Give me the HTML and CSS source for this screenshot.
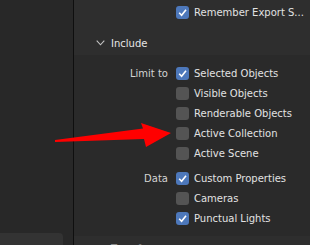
FILE: index.html
```html
<!DOCTYPE html>
<html lang="en">
<head>
  <meta charset="UTF-8">
  <title>Export Include</title>
  <link rel="stylesheet" href="styles.css">
</head>
<body>
  <div class="app">
    <div class="sidebar">
      <div class="sidebar-foot"></div>
    </div>
    <div class="props">
      <div class="top-section">
        <div class="check top-check">
          <span class="box on"><svg viewBox="0 0 13 13"><path d="M3.2 6.8 L5.6 9.2 L10 3.8"/></svg></span>
          <span>Remember Export S...</span>
        </div>
      </div>
      <div class="subheader">
        <svg class="chevron" viewBox="0 0 9 6"><path d="M0.7 0.7 L4.5 4.8 L8.3 0.7"/></svg>
        <span>Include</span>
      </div>
      <div class="group first">
        <div class="label">Limit to</div>
        <div class="check"><span class="box on"><svg viewBox="0 0 13 13"><path d="M3.2 6.8 L5.6 9.2 L10 3.8"/></svg></span><span>Selected Objects</span></div>
        <div class="label"></div>
        <div class="check"><span class="box"></span><span>Visible Objects</span></div>
        <div class="label"></div>
        <div class="check"><span class="box"></span><span>Renderable Objects</span></div>
        <div class="label"></div>
        <div class="check"><span class="box"></span><span>Active Collection</span></div>
        <div class="label"></div>
        <div class="check"><span class="box"></span><span>Active Scene</span></div>
      </div>
      <div class="group second">
        <div class="label">Data</div>
        <div class="check"><span class="box on"><svg viewBox="0 0 13 13"><path d="M3.2 6.8 L5.6 9.2 L10 3.8"/></svg></span><span>Custom Properties</span></div>
        <div class="label"></div>
        <div class="check"><span class="box"></span><span>Cameras</span></div>
        <div class="label"></div>
        <div class="check"><span class="box on"><svg viewBox="0 0 13 13"><path d="M3.2 6.8 L5.6 9.2 L10 3.8"/></svg></span><span>Punctual Lights</span></div>
      </div>
      <div class="subheader next">
        <svg class="chevron" viewBox="0 0 6 9"><path d="M0.7 0.7 L4.8 4.5 L0.7 8.3"/></svg>
        <span>Transform</span>
      </div>
    </div>
  </div>

  <!-- red annotation arrow drawn over the panel -->
  <svg class="arrow" viewBox="0 0 310 245">
    <polygon points="55,140 143,128.5 141,123 171,133 146,147 144,139 55,142"/>
  </svg>
</body>
</html>
```

FILE: styles.css
```css
body {
  margin: 0;
  padding: 0;
  background-color: #2a2a2a;
  font-family: "DejaVu Sans", sans-serif;
  font-size: 10px;
  color: #e2e2e2;
}
.app {
  display: flex;
  width: 310px;
  height: 245px;
  overflow: hidden;
}
.sidebar {
  width: 73px;
  flex-shrink: 0;
  background-color: #282828;
  border-right: 1px solid #0f0f0f;
  display: flex;
  flex-direction: column;
  justify-content: flex-end;
}
.sidebar-foot {
  width: 63px;
  height: 12px;
  background-color: #333333;
  border-top-right-radius: 4px;
}
.props {
  flex: 1;
  display: flex;
  flex-direction: column;
  background-color: #2a2a2a;
  overflow: hidden;
}
.top-section {
  height: 29px;
  padding-top: 2px;
  flex-shrink: 0;
  background-color: #2e2e2e;
}
.top-check {
  height: 20px;
  padding-left: 102px;
}
.subheader {
  height: 24px;
  flex-shrink: 0;
  display: flex;
  align-items: center;
  padding-left: 22px;
  background-color: #2e2e2e;
  color: #e6e6e6;
}
.chevron {
  width: 9px;
  height: 6px;
  margin-right: 6px;
  fill: none;
  stroke: #c4c4c4;
  stroke-width: 1.1;
}
.subheader.next {
  margin-top: 8px;
  padding-top: 7px;
  align-items: flex-start;
  color: #8a8a8a;
}
.subheader.next .chevron {
  width: 6px;
  height: 9px;
  margin-left: 2px;
  margin-right: 7px;
  margin-top: 2px;
}
.group {
  display: grid;
  grid-template-columns: 94px 1fr;
  column-gap: 8px;
  grid-auto-rows: 20px;
  flex-shrink: 0;
}
.group.first {
  padding-top: 8px;
}
.group.second {
  margin-top: 5px;
}
.label {
  display: flex;
  align-items: center;
  justify-content: flex-end;
  color: #d4d4d4;
}
.check {
  display: flex;
  align-items: center;
  gap: 5px;
  white-space: nowrap;
}
.box {
  width: 13px;
  height: 13px;
  flex-shrink: 0;
  border-radius: 3px;
  background-color: #545454;
  display: flex;
}
.box.on {
  background-color: #4d78bb;
}
.box svg {
  width: 13px;
  height: 13px;
  fill: none;
  stroke: #ffffff;
  stroke-width: 1.6;
}
.arrow {
  position: absolute;
  top: 0;
  left: 0;
  width: 310px;
  height: 245px;
  fill: #ff0000;
  pointer-events: none;
}
```
